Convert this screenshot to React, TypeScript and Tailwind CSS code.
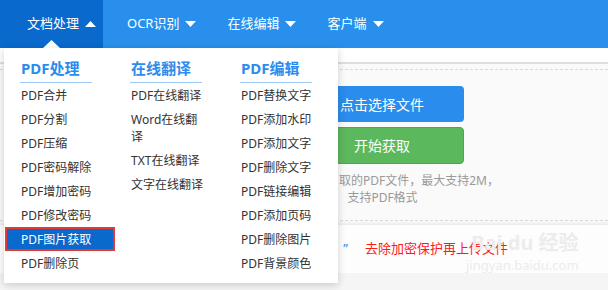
const Caret = () => (
    <svg width="11" height="6" viewBox="0 0 11 6" className="ml-[6px]">
        <polygon points="0,0 11,0 5.5,6" fill="#ffffff" />
    </svg>
)

const menu = [
    {
        title: 'PDF处理',
        items: ['PDF合并', 'PDF分割', 'PDF压缩', 'PDF密码解除', 'PDF增加密码', 'PDF修改密码', 'PDF图片获取', 'PDF删除页'],
    },
    {
        title: '在线翻译',
        items: ['PDF在线翻译', 'Word在线翻|译', 'TXT在线翻译', '文字在线翻译'],
    },
    {
        title: 'PDF编辑',
        items: ['PDF替换文字', 'PDF添加水印', 'PDF添加文字', 'PDF删除文字', 'PDF链接编辑', 'PDF添加页码', 'PDF删除图片', 'PDF背景颜色'],
    },
]

const App = () => {
    const active = 'PDF图片获取'

    return (
        <div className="relative w-[608px] h-[290px] overflow-hidden bg-[#f5f5f5] font-['Noto_Sans','Noto_Sans_CJK_SC',sans-serif]">
            {/* top nav */}
            <nav className="flex h-12 bg-[#2890ec] text-[13px] text-white">
                <div className="flex w-[103px] items-center bg-[#0a69cd] pl-[27px]">
                    文档处理
                    <svg width="11" height="6" viewBox="0 0 11 6" className="ml-[6px]">
                        <polygon points="0,6 11,6 5.5,0" fill="#ffffff" />
                    </svg>
                </div>
                <div className="flex items-center pl-[24px] pr-[7px]">
                    OCR识别
                    <Caret />
                </div>
                <div className="flex items-center pl-[24px] pr-[7px]">
                    在线编辑
                    <Caret />
                </div>
                <div className="flex items-center pl-[24px] pr-[7px]">
                    客户端
                    <Caret />
                </div>
            </nav>

            {/* page behind the menu */}
            <main className="flex flex-col">
                <div className="h-4 border-b-2 border-[#dedede] bg-white" />
                <section className="bg-[#fafafa] pt-[5px]">
                    <div className="border-t border-dashed border-[#d9d9d9]" />
                    <div className="flex flex-col gap-[5px] pl-[300px] pt-[16px]">
                        <button className="h-[36px] w-[164px] rounded-[4px] bg-[#2a8ced] text-[14px] text-white">
                            点击选择文件
                        </button>
                        <button className="h-[37px] w-[164px] rounded-[4px] border border-[#4aa84a] bg-[#5cb85c] text-[14px] text-white">
                            开始获取
                        </button>
                    </div>
                    <div className="pt-[8px] text-[12px] leading-[17px] text-[#999999]">
                        <p className="pl-[339px]">取的PDF文件，最大支持2M，</p>
                        <p className="w-[465px] pl-[300px] text-center">支持PDF格式</p>
                    </div>
                    <div className="mt-[14px] border-t border-dashed border-[#d9d9d9]" />
                </section>
                <div className="h-[4px] bg-[linear-gradient(#fafafa,#ececec)]" />
                <div className="relative flex h-[48px] items-center bg-[#fdfdfd] text-[13px]">
                    <span className="w-[348px] text-right text-[#3a8ee6]">”</span>
                    <span className="ml-[17px] text-[#ff1a1a]">去除加密保护再上传文件</span>
                    <div className="absolute left-[466px] top-[8px] flex flex-col items-end leading-none text-[#ececec]">
                        <span className="text-[20px] font-bold">Bai du 经验</span>
                        <span className="mt-[6px] text-[13px]">jingyan.baidu.com</span>
                    </div>
                </div>
            </main>

            {/* dropdown arrow */}
            <svg width="17" height="8" viewBox="0 0 17 8" className="absolute left-[43px] top-[40px]">
                <polygon points="0,8 17,8 8.5,0" fill="#ffffff" />
            </svg>

            {/* dropdown */}
            <div className="absolute left-[4px] top-[48px] flex h-[235px] w-[334px] bg-white pl-[1px] pt-[10px] shadow-[0_2px_8px_rgba(0,0,0,0.18)]">
                {menu.map((col) => (
                    <div key={col.title} className="w-[110px]">
                        <div className="ml-[15px] w-[72px] border-b border-[#9fcaf5] pb-[4px] pl-[1px] text-[15px] font-bold leading-[20px] text-[#2b8cee]">
                            {col.title}
                        </div>
                        {col.items.map((item) =>
                            item === active ? (
                                <div
                                    key={item}
                                    className="border-2 border-[#e53935] bg-[#0a69cd] py-[1.5px] pl-[14px] text-[12px] leading-[17px] text-white"
                                >
                                    {item}
                                </div>
                            ) : (
                                <div key={item} className="px-4 py-[3.5px] text-[12px] leading-[17px] text-[#333333]">
                                    {item.split('|').map((part, i) => (
                                        <div key={i}>{part}</div>
                                    ))}
                                </div>
                            )
                        )}
                    </div>
                ))}
            </div>
        </div>
    )
}

export default App
